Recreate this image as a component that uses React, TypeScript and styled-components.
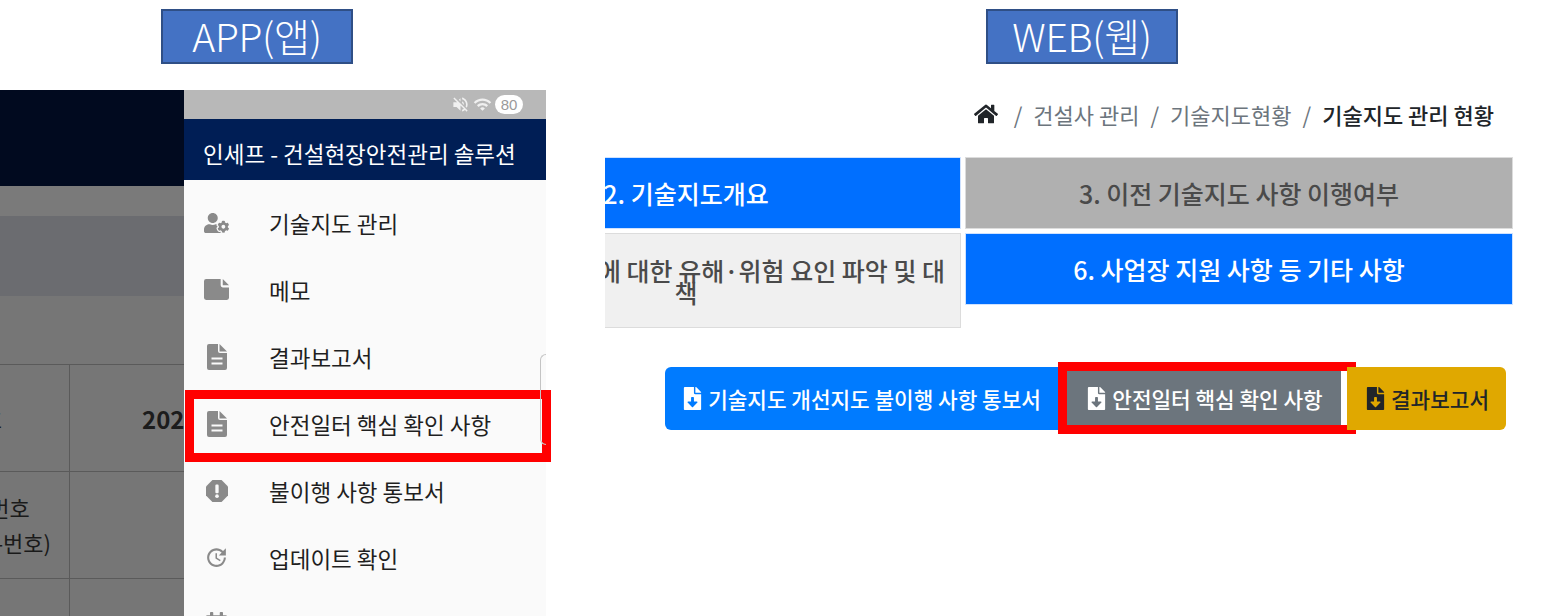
import React from 'react';
import styled, { createGlobalStyle } from 'styled-components';
import { FaCalendarAlt, FaFileDownload, FaHome, FaUserCog } from 'react-icons/fa';
import { MdUpdate, MdVolumeOff, MdWifi } from 'react-icons/md';

const GlobalStyle = createGlobalStyle`
  html, body {
    margin: 0;
    padding: 0;
    background: #ffffff;
    overflow: hidden;
  }
  body {
    font-family: "Noto Sans CJK KR", "Noto Sans", sans-serif;
  }
`;

const Page = styled.div`
  display: flex;
  width: 1559px;
  height: 616px;
  overflow: hidden;
`;

const AppColumn = styled.section`
  width: 546px;
  flex: none;
  padding-top: 9px;
  box-sizing: border-box;
`;

const WebColumn = styled.section`
  flex: 1;
  padding-top: 9px;
  box-sizing: border-box;
`;

const Label = styled.div<{ $left: number }>`
  width: 192px;
  height: 55px;
  margin-left: ${(p) => p.$left}px;
  padding-bottom: 3px;
  box-sizing: border-box;
  display: flex;
  align-items: center;
  justify-content: center;
  background: #4472c4;
  border: 2px solid #2f4f86;
  color: #ffffff;
  font-size: 39px;
  font-weight: 300;
  letter-spacing: -0.3px;
`;

/* phone */

const Phone = styled.div`
  display: flex;
  height: 526px;
  margin-top: 26px;
`;

const Dimmed = styled.div`
  width: 184px;
  flex: none;
  overflow: hidden;
  background: #767676;
`;

const Band = styled.div<{ $h: number; $bg: string }>`
  height: ${(p) => p.$h}px;
  background: ${(p) => p.$bg};
`;

const TableRow = styled.div<{ $h: number }>`
  display: grid;
  grid-template-columns: 70px 114px;
  height: ${(p) => p.$h}px;
  box-sizing: border-box;
  border-top: 1.5px solid #5a5a5a;
`;

const KeyCell = styled.div<{ $right?: number }>`
  border-right: 1.5px solid #5a5a5a;
  display: flex;
  align-items: center;
  justify-content: flex-end;
  padding-right: ${(p) => p.$right ?? 0}px;
  overflow: hidden;
`;

const KeyText = styled.div`
  flex: none;
  text-align: center;
  font-size: 22px;
  line-height: 35px;
  color: #1a1a1a;
  white-space: nowrap;
`;

const ValueCell = styled.div`
  display: flex;
  align-items: center;
  padding-left: 72px;
  font-size: 24px;
  font-weight: 700;
  color: #1c1c1c;
  white-space: nowrap;
  overflow: hidden;
`;

const Drawer = styled.div`
  position: relative;
  width: 362px;
  flex: none;
  display: flex;
  flex-direction: column;
  background: #fafafa;
`;

const DrawerHandle = styled.div`
  position: absolute;
  top: 264px;
  right: 0;
  width: 6px;
  height: 91px;
  box-sizing: border-box;
  border: 1px solid #c4c4c4;
  border-right: none;
  border-radius: 6px 0 0 6px;
`;

const StatusBar = styled.div`
  height: 29px;
  flex: none;
  display: flex;
  align-items: center;
  justify-content: flex-end;
  gap: 3px;
  padding-right: 23px;
  background: #b8b8b8;
  color: #f0f0f0;
`;

const Battery = styled.span`
  width: 28px;
  height: 19px;
  border-radius: 10px;
  background: #ffffff;
  color: #9a9a9a;
  font-family: "Liberation Sans", sans-serif;
  font-size: 15px;
  line-height: 19px;
  text-align: center;
`;

const DrawerHeader = styled.div`
  height: 61px;
  flex: none;
  box-sizing: border-box;
  padding: 18px 0 0 19px;
  background: #001e55;
  color: #ffffff;
  font-size: 22.5px;
  line-height: 32px;
  white-space: nowrap;
`;

const Menu = styled.div`
  padding-top: 9px;
`;

const MenuItem = styled.div<{ $marked?: boolean }>`
  position: relative;
  display: flex;
  align-items: center;
  height: 67px;
  padding-left: 20px;
  color: #1f1f1f;
  font-size: 22.5px;
  white-space: nowrap;

  ${(p) =>
    p.$marked &&
    `
    &::after {
      content: '';
      position: absolute;
      left: 1px;
      top: 0;
      width: 366px;
      height: 72px;
      box-sizing: border-box;
      border: 9px solid #ff0000;
    }
  `}
`;

const MenuIcon = styled.span`
  width: 25px;
  height: 30px;
  flex: none;
  margin-right: 40px;
  display: flex;
  align-items: center;
  justify-content: center;
  color: #8a8a8a;
  font-size: 26px;
`;

/* web */

const Breadcrumb = styled.nav`
  display: flex;
  align-items: center;
  justify-content: flex-end;
  height: 32px;
  margin: 34px 65px 0 0;
  font-size: 22px;
  color: #6c757d;
  white-space: nowrap;
`;

const HomeIcon = styled.span`
  display: flex;
  margin-right: 5px;
  color: #212529;
  font-size: 24px;
`;

const Slash = styled.span`
  margin: 0 11px;
`;

const Current = styled.span`
  color: #212529;
  font-weight: 500;
`;

const TabsViewport = styled.div`
  display: flex;
  justify-content: flex-end;
  width: 908px;
  height: 172px;
  margin: 27px 0 0 59px;
  overflow: hidden;
`;

const TabsGrid = styled.div`
  flex: none;
  display: grid;
  grid-template-columns: 550px 548px;
  grid-auto-rows: min-content;
  gap: 4px;
  align-items: start;
`;

const Tab = styled.div<{ $kind: 'blue' | 'gray' | 'light' }>`
  box-sizing: border-box;
  height: ${(p) => (p.$kind === 'light' ? 95 : 72)}px;
  display: flex;
  align-items: center;
  justify-content: center;
  text-align: center;
  padding: 0 8px;
  border: 1.5px solid ${(p) => (p.$kind === 'blue' ? '#cfe2ff' : '#dcdcdc')};
  background: ${(p) => (p.$kind === 'blue' ? '#006fff' : p.$kind === 'gray' ? '#b0b0b0' : '#f0f0f0')};
  color: ${(p) => (p.$kind === 'blue' ? '#ffffff' : '#4a4a4a')};
  font-size: 25px;
  font-weight: 500;
  line-height: 22px;
`;

const ButtonRow = styled.div`
  display: flex;
  height: 63px;
  margin: 38px 0 0 119px;
`;

const ActionButton = styled.div<{ $bg: string; $fg: string; $w: number; $radius?: string; $marked?: boolean; $inset?: number }>`
  position: relative;
  width: ${(p) => p.$w}px;
  flex: none;
  box-sizing: border-box;
  padding-right: ${(p) => p.$inset ?? 0}px;
  display: flex;
  align-items: center;
  justify-content: center;
  gap: 4px;
  background: ${(p) => p.$bg};
  color: ${(p) => p.$fg};
  border-radius: ${(p) => p.$radius ?? '0'};
  font-size: 21.3px;
  font-weight: 500;
  white-space: nowrap;

  svg {
    font-size: 23px;
    flex: none;
  }

  ${(p) =>
    p.$marked &&
    `
    border-right: 6px solid #ffffff;

    &::after {
      content: '';
      position: absolute;
      left: -9px;
      top: -5px;
      width: 298px;
      height: 72px;
      box-sizing: border-box;
      border: 9px solid #ff0000;
    }
  `}
`;

function NoteIcon() {
  return (
    <svg width="25" height="21" viewBox="0 0 24 20" fill="currentColor">
      <path d="M2 0h14v6a2 2 0 0 0 2 2h6v10a2 2 0 0 1-2 2H2a2 2 0 0 1-2-2V2a2 2 0 0 1 2-2z" />
      <path d="M18 0l6 6h-6z" />
    </svg>
  );
}

function FileIcon() {
  return (
    <svg width="20" height="26" viewBox="0 0 20 26">
      <path fill="currentColor" d="M2 0h9v7a2 2 0 0 0 2 2h7v15a2 2 0 0 1-2 2H2a2 2 0 0 1-2-2V2a2 2 0 0 1 2-2z" />
      <path fill="currentColor" d="M12.5 0L20 7.5h-7.5z" />
      <rect x="4.5" y="13.5" width="11" height="2" fill="#fafafa" />
      <rect x="4.5" y="18.5" width="11" height="2" fill="#fafafa" />
    </svg>
  );
}

function OctagonIcon() {
  return (
    <svg width="22" height="22" viewBox="0 0 24 24">
      <path fill="currentColor" d="M7 0h10l7 7v10l-7 7H7l-7-7V7z" />
      <rect x="10.2" y="5" width="3.6" height="9.5" rx="1.2" fill="#fafafa" />
      <circle cx="12" cy="17.6" r="2" fill="#fafafa" />
    </svg>
  );
}

const menu = [
  { icon: <FaUserCog />, label: '기술지도 관리' },
  { icon: <NoteIcon />, label: '메모' },
  { icon: <FileIcon />, label: '결과보고서' },
  { icon: <FileIcon />, label: '안전일터 핵심 확인 사항', marked: true },
  { icon: <OctagonIcon />, label: '불이행 사항 통보서' },
  { icon: <MdUpdate size={27} />, label: '업데이트 확인' },
  { icon: <FaCalendarAlt />, label: '' },
];

const App: React.FC = () => (
  <>
    <GlobalStyle />
    <Page>
      <AppColumn>
        <Label $left={161}>APP(앱)</Label>
        <Phone>
          <Dimmed>
            <Band $h={96} $bg="#010a1f" />
            <Band $h={30} $bg="#7a7a7a" />
            <Band $h={80} $bg="#6b6c70" />
            <Band $h={68} $bg="#767676" />
            <TableRow $h={107}>
              <KeyCell $right={67}>
                <KeyText>관리번호</KeyText>
              </KeyCell>
              <ValueCell>2024</ValueCell>
            </TableRow>
            <TableRow $h={107}>
              <KeyCell $right={18}>
                <KeyText>
                  사업자번호
                  <br />
                  (법인등록-번호)
                </KeyText>
              </KeyCell>
              <ValueCell />
            </TableRow>
            <TableRow $h={40}>
              <KeyCell />
              <ValueCell />
            </TableRow>
          </Dimmed>
          <Drawer>
            <StatusBar>
              <MdVolumeOff size={19} />
              <MdWifi size={19} />
              <Battery>80</Battery>
            </StatusBar>
            <DrawerHeader>인세프 - 건설현장안전관리 솔루션</DrawerHeader>
            <Menu>
              {menu.map((item, i) => (
                <MenuItem key={i} $marked={item.marked}>
                  <MenuIcon>{item.icon}</MenuIcon>
                  {item.label}
                </MenuItem>
              ))}
            </Menu>
            <DrawerHandle />
          </Drawer>
        </Phone>
      </AppColumn>
      <WebColumn>
        <Label $left={440}>WEB(웹)</Label>
        <Breadcrumb>
          <HomeIcon>
            <FaHome />
          </HomeIcon>
          <Slash>/</Slash>
          <span>건설사 관리</span>
          <Slash>/</Slash>
          <span>기술지도현황</span>
          <Slash>/</Slash>
          <Current>기술지도 관리 현황</Current>
        </Breadcrumb>
        <TabsViewport>
          <TabsGrid>
            <Tab $kind="blue">2. 기술지도개요</Tab>
            <Tab $kind="gray">3. 이전 기술지도 사항 이행여부</Tab>
            <Tab $kind="light">5. 주요 작업공정에 대한 유해·위험 요인 파악 및 대책</Tab>
            <Tab $kind="blue">6. 사업장 지원 사항 등 기타 사항</Tab>
          </TabsGrid>
        </TabsViewport>
        <ButtonRow>
          <ActionButton $bg="#007bff" $fg="#ffffff" $w={402} $radius="6px 0 0 6px" $inset={10}>
            <FaFileDownload />
            기술지도 개선지도 불이행 사항 통보서
          </ActionButton>
          <ActionButton $bg="#6c757d" $fg="#ffffff" $w={280} $marked>
            <FaFileDownload />
            안전일터 핵심 확인 사항
          </ActionButton>
          <ActionButton $bg="#e0a800" $fg="#212529" $w={159} $radius="0 6px 6px 0">
            <FaFileDownload />
            결과보고서
          </ActionButton>
        </ButtonRow>
      </WebColumn>
    </Page>
  </>
);

export default App;
